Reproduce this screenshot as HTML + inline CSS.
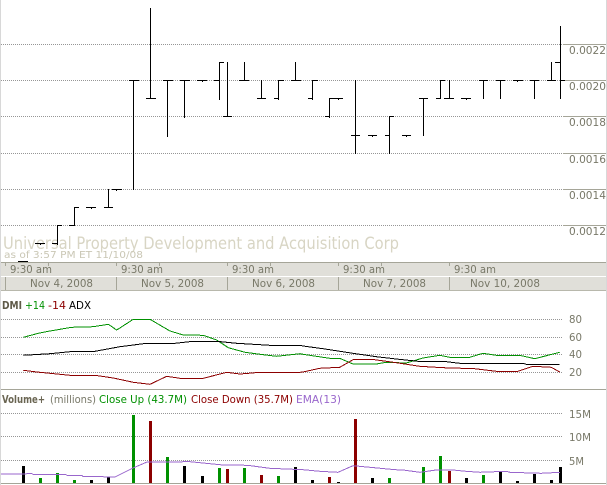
<!DOCTYPE html>
<html>
<head>
<meta charset="utf-8">
<style>
html,body{margin:0;padding:0;background:#fff;width:607px;height:485px;overflow:hidden}
svg{display:block}
text{font-family:"DejaVu Sans","Liberation Sans",sans-serif;font-size:10.5px;fill:#787868}
.n{font-size:11px}
</style>
</head>
<body>
<svg width="607" height="485" viewBox="0 0 607 485" xmlns="http://www.w3.org/2000/svg">
<rect x="0" y="0" width="1" height="485" fill="#d8d8d8"/>
<rect x="606" y="0" width="1" height="485" fill="#d8d8d8"/>

<!-- grid -->
<g shape-rendering="crispEdges" stroke="#969696" stroke-dasharray="1 1" fill="none">
<path d="M1 44.5H563M1 80.5H563M1 116.5H563M1 153.5H563M1 189.5H563M1 225.5H563"/>
<path d="M1 319.5H563M1 337.5H563M1 354.5H563M1 372.5H563"/>
<path d="M1 413.5H563M1 436.5H563M1 460.5H563"/>
</g>
<g shape-rendering="crispEdges" stroke="#a5a598" fill="none">
<path d="M563 44.5H606M563 80.5H606M563 116.5H606M563 153.5H606M563 189.5H606M563 225.5H606"/>
<path d="M1 389.5H606M1 483.5H606"/>
</g>

<!-- title -->
<text x="3" y="249" textLength="396" lengthAdjust="spacingAndGlyphs" style="font-size:17px;fill:#d8d5c4">Universal Property Development and Acquisition Corp</text>
<text x="4" y="258" textLength="139" lengthAdjust="spacingAndGlyphs" style="font-size:10px;fill:#cac7b5">as of 3:57 PM ET 11/10/08</text>

<!-- ohlc -->
<path shape-rendering="crispEdges" stroke="#000" stroke-width="1" fill="none" d="
M18 261.5H28
M35 243.5H45M40.5 243V245
M52 243.5H57.5M57.5 225V245M57 225.5H62
M69 225.5H74.5M74.5 207V226M74 207.5H79
M86 207.5H96M91.5 207V209
M104 207.5H113M108.5 189V208
M112 189.5H122M116.5 189V191
M129 80.5H139M133.5 80V190
M146 98.5H156M150.5 8V99
M163 80.5H173M167.5 80V137
M180 80.5H190M184.5 80V118
M197 80.5H207M202.5 80V82
M214 80.5H219.5M219.5 62V100M219 62.5H224
M223 116.5H232M227.5 62V117
M239 80.5H249M244.5 62V81
M257 98.5H266M261.5 80V99
M274 98.5H278.5M278.5 80V100M278 80.5H284
M291 80.5H301M295.5 62V81
M308 98.5H312.5M312.5 80V100M312 80.5H318
M325 116.5H329.5M329.5 98V118M329 98.5H334
M333 98.5H343M338.5 98V100
M351 135.5H360M355.5 80V154
M368 135.5H377M372.5 135V137
M385 135.5H389.5M389.5 116V154M389 116.5H394
M402 135.5H411M406.5 135V137
M419 98.5H428M423.5 98V136
M436 98.5H440.5M440.5 80V99M440 80.5H445
M444 98.5H454M449.5 80V99
M461 98.5H471M466.5 98V100
M479 80.5H488M483.5 80V99
M496 80.5H505M500.5 80V99
M513 80.5H523M517.5 80V82
M530 80.5H539M534.5 80V99
M547 80.5H556M551.5 62V81
M555 62.5H560.5M560.5 26V99M560 80.5H565
"/>

<!-- price labels -->
<text class="n" x="569" y="54" textLength="37" lengthAdjust="spacingAndGlyphs">0.0022</text>
<text class="n" x="569" y="90" textLength="37" lengthAdjust="spacingAndGlyphs">0.0020</text>
<text class="n" x="569" y="126" textLength="37" lengthAdjust="spacingAndGlyphs">0.0018</text>
<text class="n" x="569" y="163" textLength="37" lengthAdjust="spacingAndGlyphs">0.0016</text>
<text class="n" x="569" y="199" textLength="37" lengthAdjust="spacingAndGlyphs">0.0014</text>
<text class="n" x="569" y="235" textLength="37" lengthAdjust="spacingAndGlyphs">0.0012</text>

<!-- axis -->
<rect x="1" y="262" width="605" height="29" fill="#e0dfd9"/>
<rect x="1" y="262" width="605" height="1" fill="#a5a598"/>
<rect x="1" y="276" width="605" height="1" fill="#ffffff"/>
<rect x="1" y="290" width="605" height="1" fill="#b8b8ac"/>
<g shape-rendering="crispEdges" stroke="#a5a598" fill="none">
<path d="M5.5 263V266M48.5 263V266M116.5 263V266M159.5 263V266M227.5 263V266M270.5 263V266M338.5 263V266M381.5 263V266M449.5 263V266"/>
<path d="M5.5 277V290M116.5 277V290M227.5 277V290M338.5 277V290M449.5 277V290"/>
</g>
<text x="10" y="273" textLength="42" lengthAdjust="spacingAndGlyphs">9:30 am</text>
<text x="121" y="273" textLength="42" lengthAdjust="spacingAndGlyphs">9:30 am</text>
<text x="232" y="273" textLength="42" lengthAdjust="spacingAndGlyphs">9:30 am</text>
<text x="343" y="273" textLength="42" lengthAdjust="spacingAndGlyphs">9:30 am</text>
<text x="454" y="273" textLength="42" lengthAdjust="spacingAndGlyphs">9:30 am</text>
<text x="30" y="287" textLength="63" lengthAdjust="spacingAndGlyphs">Nov 4, 2008</text>
<text x="141" y="287" textLength="63" lengthAdjust="spacingAndGlyphs">Nov 5, 2008</text>
<text x="252" y="287" textLength="63" lengthAdjust="spacingAndGlyphs">Nov 6, 2008</text>
<text x="363" y="287" textLength="63" lengthAdjust="spacingAndGlyphs">Nov 7, 2008</text>
<text x="470" y="287" textLength="70" lengthAdjust="spacingAndGlyphs">Nov 10, 2008</text>

<!-- DMI header -->
<text x="2" y="309" textLength="20" lengthAdjust="spacingAndGlyphs" style="font-weight:bold;fill:#5f5a48">DMI</text>
<text x="25" y="309" textLength="20" lengthAdjust="spacingAndGlyphs" style="fill:#009000">+14</text>
<text x="48" y="309" textLength="18" lengthAdjust="spacingAndGlyphs" style="fill:#8c0000">-14</text>
<text x="69" y="309" textLength="22" lengthAdjust="spacingAndGlyphs" style="fill:#000">ADX</text>

<!-- DMI labels -->
<text class="n" x="569" y="323" textLength="13" lengthAdjust="spacingAndGlyphs">80</text>
<text class="n" x="569" y="341" textLength="13" lengthAdjust="spacingAndGlyphs">60</text>
<text class="n" x="569" y="358" textLength="13" lengthAdjust="spacingAndGlyphs">40</text>
<text class="n" x="569" y="376" textLength="13" lengthAdjust="spacingAndGlyphs">20</text>

<!-- DMI lines -->
<g fill="none" stroke-width="1" shape-rendering="crispEdges">
<polyline stroke="#009000" points="23.3,337.3 38.3,333.3 50,331 71.7,327.3 93.3,326.7 108.3,324.3 116.7,330 133.3,319.3 150,319.3 170,331 183.3,335 203.3,335.3 216.7,340 228.3,347.7 245,352.3 263.3,354.7 276.7,356.3 300,353.7 303,354.3 316.3,356.3 329.7,358.3 339.7,358.3 353,364 376.3,364 386.3,362.3 406.3,363 423,358 439.7,355.3 449.7,357.3 469.7,357.3 483,353.3 496.3,355.3 519.7,355.3 534.7,358.7 559.7,352.3"/>
<polyline stroke="#000" points="23.3,355.3 50,353.7 70,351.7 95,351.3 120,346.7 146.7,343.3 175,343.3 193.3,341.3 216.7,341.3 236.7,343.3 270,345.3 300,345.3 303,346 323,348.7 353,353.3 376.3,356.7 396.3,359 418,361.3 443,361.3 459.7,363.3 523,363.3 526.3,364.3 559.7,364.3"/>
<polyline stroke="#8c0000" points="23.3,370.3 36.7,372 70,375.3 95,375.3 113.3,378 133.3,382.3 150,384.3 166.7,376.3 180,378.3 203.3,378.3 226.7,372.3 240,374 260,372.3 300,372.3 303,372 319.7,368.3 339.7,367.3 353,359.7 374.7,359.7 396.3,362.7 419.7,366.3 443,367.7 474.7,368.7 496.3,371.3 518,371.3 533,366.3 551.3,367.3 559.7,372"/>
</g>

<!-- volume header -->
<text x="2" y="403" textLength="43" lengthAdjust="spacingAndGlyphs" style="font-weight:bold;fill:#6a6552">Volume+</text>
<text x="50" y="403" textLength="46" lengthAdjust="spacingAndGlyphs">(millions)</text>
<text x="99" y="403" textLength="88" lengthAdjust="spacingAndGlyphs" style="fill:#009000">Close Up (43.7M)</text>
<text x="191" y="403" textLength="102" lengthAdjust="spacingAndGlyphs" style="fill:#8c0000">Close Down (35.7M)</text>
<text x="296" y="403" textLength="45" lengthAdjust="spacingAndGlyphs" style="fill:#9966cc">EMA(13)</text>

<!-- volume labels -->
<text class="n" x="569" y="418" textLength="22" lengthAdjust="spacingAndGlyphs">15M</text>
<text class="n" x="569" y="441" textLength="22" lengthAdjust="spacingAndGlyphs">10M</text>
<text class="n" x="569" y="465" textLength="15" lengthAdjust="spacingAndGlyphs">5M</text>

<!-- volume bars -->
<g shape-rendering="crispEdges" fill="#000">
<rect x="22" y="466" width="3" height="17"/>
<rect x="90" y="480" width="3" height="3"/>
<rect x="107" y="477" width="3" height="6"/>
<rect x="183" y="466" width="3" height="17"/>
<rect x="201" y="476" width="3" height="7"/>
<rect x="294" y="467" width="3" height="16"/>
<rect x="311" y="480" width="3" height="3"/>
<rect x="337" y="482" width="3" height="1"/>
<rect x="371" y="478" width="3" height="5"/>
<rect x="465" y="478" width="3" height="5"/>
<rect x="499" y="472" width="3" height="11"/>
<rect x="516" y="481" width="3" height="2"/>
<rect x="533" y="474" width="3" height="9"/>
<rect x="550" y="480" width="3" height="3"/>
<rect x="559" y="467" width="3" height="16"/>
</g>
<g shape-rendering="crispEdges" fill="#009000">
<rect x="39" y="478" width="3" height="5"/>
<rect x="56" y="473" width="3" height="10"/>
<rect x="73" y="480" width="3" height="3"/>
<rect x="132" y="415" width="3" height="68"/>
<rect x="166" y="457" width="3" height="26"/>
<rect x="218" y="468" width="3" height="15"/>
<rect x="243" y="468" width="3" height="15"/>
<rect x="277" y="476" width="3" height="7"/>
<rect x="388" y="478" width="3" height="5"/>
<rect x="422" y="467" width="3" height="16"/>
<rect x="439" y="456" width="3" height="27"/>
<rect x="482" y="475" width="3" height="8"/>
</g>
<g shape-rendering="crispEdges" fill="#8c0000">
<rect x="149" y="421" width="3" height="62"/>
<rect x="226" y="469" width="3" height="14"/>
<rect x="260" y="475" width="3" height="8"/>
<rect x="328" y="477" width="3" height="6"/>
<rect x="354" y="419" width="3" height="64"/>
<rect x="448" y="471" width="3" height="12"/>
</g>

<!-- EMA -->
<polyline fill="none" stroke="#9966cc" stroke-width="1" shape-rendering="crispEdges" points="1,474 32,473.7 33,474.3 65,474.3 67,475.3 82,475.3 83,476.3 115,477 133,468 147,462 190,461.7 210,463.7 223,465 248,465.3 260,467 270,468.3 303,469.7 320,471.3 338,472.3 353,465.7 370,467.3 395,469.7 403,470 420,472.3 436,470 453,470 466,471.3 480,472.3 506,471.3 510,472.3 541,473.3 560,472.3"/>
</svg>
</body>
</html>
